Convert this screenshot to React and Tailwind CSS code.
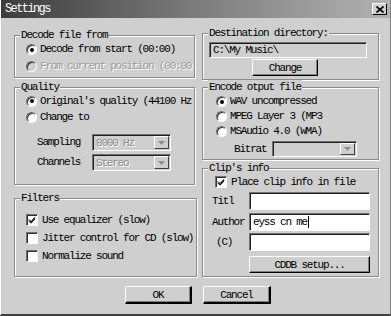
import React from "react";

const font = { fontFamily: '"Liberation Mono", "DejaVu Sans Mono", monospace' };

function Radio({ checked, disabled }) {
  return (
    <span
      className={`relative inline-flex items-center justify-center w-[11px] h-[11px] rounded-full border border-t-[#707070] border-l-[#707070] border-b-white border-r-white shrink-0 ${disabled ? "bg-[#cfcfcf]" : "bg-white"} shadow-[inset_1px_1px_0_#303030]`}
    >
      {checked && <span className="w-[4px] h-[4px] rounded-full bg-black" />}
    </span>
  );
}

function Check({ checked }) {
  return (
    <span className="inline-flex items-center justify-center w-[12px] h-[12px] border border-t-[#707070] border-l-[#707070] border-b-white border-r-white bg-white shadow-[inset_1px_1px_0_#303030] shrink-0">
      {checked && (
        <svg width="8" height="8" viewBox="0 0 8 8">
          <path d="M1 3.5 L3 5.5 L7 1.2 M1 4.5 L3 6.5 L7 2.2 M1 5.2 L3 7.2 L7 3" stroke="#000" strokeWidth="1" fill="none" />
        </svg>
      )}
    </span>
  );
}

function Group({ label, className, children }) {
  return (
    <div className={`relative border border-[#8a8a8a] shadow-[inset_1px_1px_0_#fff,1px_1px_0_#fff] ${className}`}>
      <span className="absolute left-[5px] top-[-8px] px-[1px] bg-[#cfcfcf] leading-[14px] whitespace-nowrap">{label}</span>
      {children}
    </div>
  );
}

function Combo({ text, className }) {
  return (
    <div className={`flex items-stretch border border-t-[#707070] border-l-[#707070] border-b-white border-r-white shadow-[inset_1px_1px_0_#202020] bg-[#cfcfcf] ${className}`}>
      <span className="flex-1 pl-[3px] pt-[1px] text-[#8c8c8c] leading-[14px] [text-shadow:1px_1px_0_#fff] overflow-hidden whitespace-nowrap">{text}</span>
      <span className="w-[15px] m-[1px] flex items-center justify-center border border-t-white border-l-white border-b-[#404040] border-r-[#404040] bg-[#cfcfcf]">
        <svg width="7" height="4" viewBox="0 0 7 4"><path d="M0 0 H7 L3.5 4 Z" fill="#8c8c8c" /></svg>
      </span>
    </div>
  );
}

function Input({ text, className, caret }) {
  return (
    <div className={`flex items-center border border-t-[#707070] border-l-[#707070] border-b-white border-r-white shadow-[inset_1px_1px_0_#202020] bg-white pl-[3px] ${className}`}>
      {text && <span className="leading-[14px] whitespace-nowrap">{text}</span>}
      {caret && <span className="w-[1px] h-[12px] bg-black ml-[1px]" />}
    </div>
  );
}

function Btn({ label, className }) {
  return (
    <div className={`flex items-center justify-center border border-t-white border-l-white border-b-black border-r-black shadow-[inset_-1px_-1px_0_#808080] bg-[#cfcfcf] leading-[14px] ${className}`}>
      {label}
    </div>
  );
}

export default function App() {
  return (
    <div
      className="w-[391px] h-[316px] bg-[#cfcfcf] text-[11px] tracking-[-1.2px] text-black flex flex-col border-l border-l-white border-b-2 border-b-[#404040] border-r border-r-[#808080] overflow-hidden"
      style={font}
    >
      <div className="h-[18px] shrink-0 flex items-center justify-between bg-[linear-gradient(to_right,#3c3c3c,#7c7c7c_50%,#b2b2b2)] pl-[4px] pr-[3px]">
        <span className="text-white text-[12px] tracking-[-1.6px] leading-[14px]">Settings</span>
        <span className="w-[15px] h-[12px] flex items-center justify-center bg-[#cfcfcf] border border-t-white border-l-white border-b-black border-r-black">
          <svg width="8" height="7" viewBox="0 0 8 7"><path d="M0.5 0.5 L7.5 6.5 M7.5 0.5 L0.5 6.5" stroke="#000" strokeWidth="1.6" /></svg>
        </span>
      </div>

      <div className="flex pl-[13px]">
        {/* Left column */}
        <div className="w-[181px] flex flex-col">
          <Group label="Decode file from" className="mt-[17px] h-[43px] pt-[5px] pl-[11px]">
            <div className="h-[17px] flex items-center gap-[3px]"><Radio checked /><span className="whitespace-nowrap">Decode from start (00:00)</span></div>
            <div className="h-[17px] flex items-center gap-[3px]"><Radio disabled /><span className="whitespace-nowrap text-[#9a9a9a] [text-shadow:1px_1px_0_#fff]">From current position (00:00</span></div>
          </Group>
          <Group label="Quality" className="mt-[9px] h-[98px] pt-[5px] pl-[11px] overflow-visible">
            <div className="h-[16px] flex items-center gap-[3px]"><Radio checked /><span className="whitespace-nowrap">Original's quality (44100 Hz</span></div>
            <div className="h-[16px] flex items-center gap-[3px]"><Radio /><span>Change to</span></div>
            <div className="mt-[9px] flex items-center">
              <span className="w-[66px] pl-[11px]">Sampling</span>
              <Combo text="8000 Hz" className="w-[79px] h-[17px]" />
            </div>
            <div className="mt-[3px] flex items-center">
              <span className="w-[66px] pl-[11px]">Channels</span>
              <Combo text="Stereo" className="w-[79px] h-[17px]" />
            </div>
          </Group>
          <Group label="Filters" className="mt-[13px] h-[79px] pt-[12px] pl-[11px] w-[183px]">
            <div className="h-[18px] flex items-center gap-[4px]"><Check checked /><span className="whitespace-nowrap">Use equalizer (slow)</span></div>
            <div className="h-[18px] flex items-center gap-[4px]"><Check /><span className="whitespace-nowrap">Jitter control for CD (slow)</span></div>
            <div className="h-[18px] flex items-center gap-[4px]"><Check /><span className="whitespace-nowrap">Normalize sound</span></div>
          </Group>
        </div>

        {/* Right column */}
        <div className="ml-[7px] w-[177px] flex flex-col">
          <Group label="Destination directory:" className="mt-[15px] h-[47px] pt-[8px] pl-[6px]">
            <div className="w-[158px] h-[16px] flex items-center border border-t-[#707070] border-l-[#707070] border-b-white border-r-white shadow-[inset_1px_1px_0_#202020] bg-[#cfcfcf] pl-[3px]">
              <span className="leading-[14px] whitespace-nowrap">C:\My Music\</span>
            </div>
            <Btn label="Change" className="mt-[1px] ml-[43px] w-[66px] h-[17px]" />
          </Group>
          <Group label="Encode otput file" className="mt-[7px] h-[73px] pt-[6px] pl-[13px]">
            <div className="h-[15px] flex items-center gap-[3px]"><Radio checked /><span className="whitespace-nowrap">WAV uncompressed</span></div>
            <div className="h-[15px] flex items-center gap-[3px]"><Radio /><span className="whitespace-nowrap">MPEG Layer 3 (MP3</span></div>
            <div className="h-[15px] flex items-center gap-[3px]"><Radio /><span className="whitespace-nowrap">MSAudio 4.0 (WMA)</span></div>
            <div className="mt-[2px] flex items-center">
              <span className="w-[56px] pl-[18px]">Bitrat</span>
              <Combo text="" className="w-[85px] h-[16px]" />
            </div>
          </Group>
          <Group label="Clip's info" className="mt-[8px] h-[109px] pt-[5px] pl-[9px]">
            <div className="h-[16px] flex items-center gap-[4px] pl-[3px]"><Check checked /><span className="whitespace-nowrap">Place clip info in file</span></div>
            <div className="mt-[2px] flex items-center">
              <span className="w-[37px]">Titl</span>
              <Input className="w-[121px] h-[18px]" />
            </div>
            <div className="mt-[3px] flex items-center">
              <span className="w-[37px]">Author</span>
              <Input text="eyss cn me" caret className="w-[121px] h-[18px]" />
            </div>
            <div className="mt-[2px] flex items-center">
              <span className="w-[37px] pl-[4px]">(C)</span>
              <Input className="w-[121px] h-[18px]" />
            </div>
            <Btn label="CDDB setup..." className="mt-[5px] ml-[37px] w-[121px] h-[17px]" />
          </Group>
        </div>
      </div>

      <div className="flex mt-[9px] pl-[124px] gap-[11px]">
        <Btn label="OK" className="w-[67px] h-[18px] border-b-2 border-r-2" />
        <Btn label="Cancel" className="w-[68px] h-[18px] border-b-2 border-r-2" />
      </div>
    </div>
  );
}
